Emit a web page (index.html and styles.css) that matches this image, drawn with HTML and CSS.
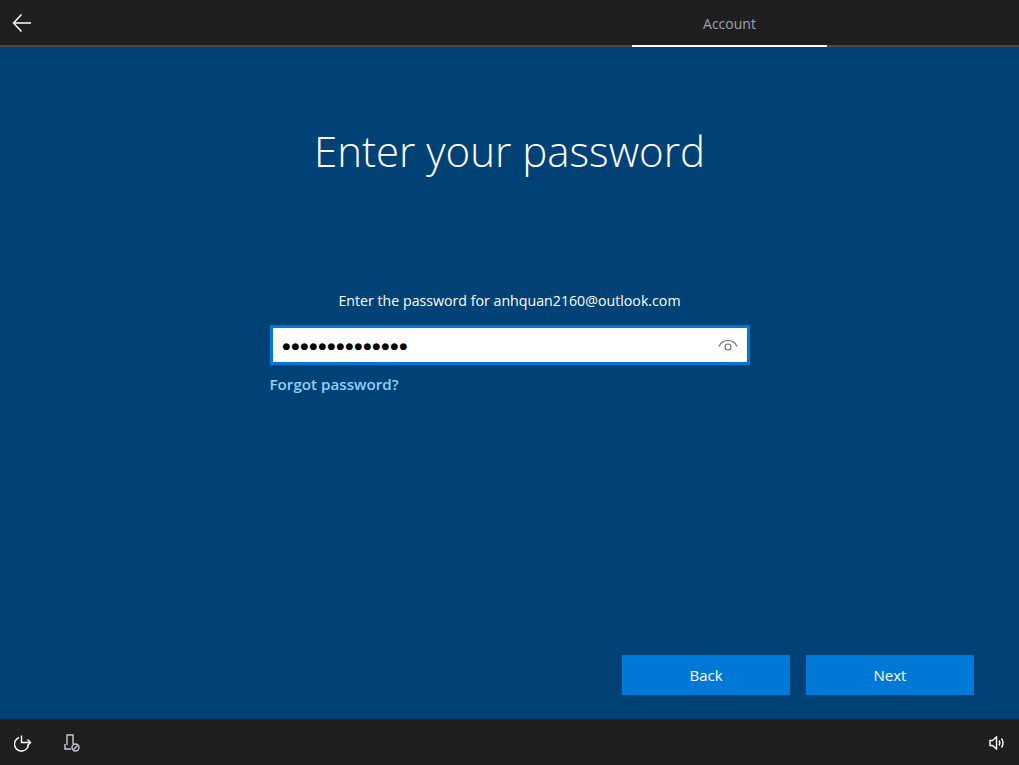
FILE: index.html
```html
<!DOCTYPE html>
<html lang="en">
<head>
<meta charset="utf-8">
<title>Enter your password</title>
<link rel="stylesheet" href="styles.css">
</head>
<body>
<div class="app">
  <header class="topbar">
    <div class="back-icon">
      <svg width="20" height="18" viewBox="0 0 20 18" fill="none" stroke="#fff" stroke-width="1.500"><path d="M9.500 .5 1.500 9l8 8.500M1.500 9H19"/></svg>
    </div>
    <div class="tab">Account</div>
  </header>
  <main class="content">
    <h1 class="title">Enter your password</h1>
    <div class="form">
      <p class="prompt">Enter the password for anhquan2160@outlook.com</p>
      <div class="field">
        <span class="dots">●●●●●●●●●●●●●●</span>
        <svg class="eye" width="20" height="12" viewBox="0 0 20 12" fill="none" stroke="#6a6a78" stroke-width="1.100"><path d="M1 7.500C3 3 6 1.500 10 1.500s7 1.500 9 6"/><circle cx="10" cy="8" r="3"/></svg>
      </div>
      <a class="forgot" href="#">Forgot password?</a>
    </div>
    <div class="actions">
      <button class="btn">Back</button>
      <button class="btn">Next</button>
    </div>
  </main>
  <footer class="bottombar">
    <div class="tools">
      <svg width="18" height="18" viewBox="0 0 18 18" fill="none" stroke="#fff" stroke-width="1.400"><path d="M5 3.500A7 7 0 1 0 14.500 10"/><path d="M7.500 1.500v7H16.500"/><path d="M13.500 5.500 16.500 8.500 13.500 11.500"/></svg>
      <svg width="16" height="18" viewBox="0 0 16 18" fill="none" stroke="#c8c8d8" stroke-width="1.400"><path d="M3 11V1h6v9"/><path d="M1 10v5h6"/><circle cx="11.500" cy="13.500" r="3.500"/><path d="M9.500 15.500l4-4"/></svg>
    </div>
    <svg width="16" height="14" viewBox="0 0 16 14" fill="none" stroke="#fff" stroke-width="1.400"><path d="M1 4.500h2.500L7.500 1v12L3.500 9.500H1z"/><path d="M10 4.500c1 1.500 1 3.500 0 5M12.500 2.500c2 2.500 2 6.500 0 9"/></svg>
  </footer>
</div>
</body>
</html>
```

FILE: styles.css
```css
* { box-sizing: border-box; }
html, body { margin: 0; height: 100%; }
body { font-family: "Open Sans", "Liberation Sans", sans-serif; background: #004275; color: #fff; overflow: hidden; }
.app { display: flex; flex-direction: column; height: 765px; }
.topbar { height: 47px; flex: none; background: #1f1f1f; border-bottom: 2px solid #4a4a4a; display: flex; justify-content: space-between; padding-left: 12px; padding-right: 192px; }
.back-icon { padding-top: 14px; line-height: 0; }
.tab { width: 195px; height: 47px; border-bottom: 2px solid #fff; text-align: center; font-size: 14px; line-height: 47px; color: #a0a0b8; }
.content { flex: 1; display: flex; flex-direction: column; align-items: center; }
.title { margin: 72px 0 0; font-weight: 300; font-size: 42px; line-height: 64px; height: 64px; }
.form { width: 480px; margin-top: 108px; display: flex; flex-direction: column; }
.prompt { margin: 0; text-align: center; font-size: 14.200px; line-height: 20px; }
.field { margin-top: 14px; height: 40px; background: #fff; border: 3px solid #0078d7; display: flex; align-items: center; justify-content: space-between; padding: 0 9px 0 10px; }
.dots { color: #000; font-family: "DejaVu Sans", sans-serif; font-size: 9px; letter-spacing: 1.150px; line-height: 34px; padding-top: 2px; }
.eye { margin-top: -1px; }
.forgot { margin-top: 9px; color: #8fd0ff; font-weight: 600; font-size: 15.200px; line-height: 20px; text-decoration: none; }
.actions { margin-top: auto; margin-bottom: 24px; align-self: flex-end; display: flex; gap: 16px; padding-right: 45px; }
.btn { width: 168px; height: 40px; border: 0; padding: 0 0 1px; background: #0078d7; color: #fff; font: 15px "Open Sans", "Liberation Sans", sans-serif; }
.bottombar { height: 46px; flex: none; background: #1f1f1f; display: flex; align-items: center; justify-content: space-between; padding: 2px 14px 0 14px; }
.tools { display: flex; align-items: center; gap: 32px; }
```
